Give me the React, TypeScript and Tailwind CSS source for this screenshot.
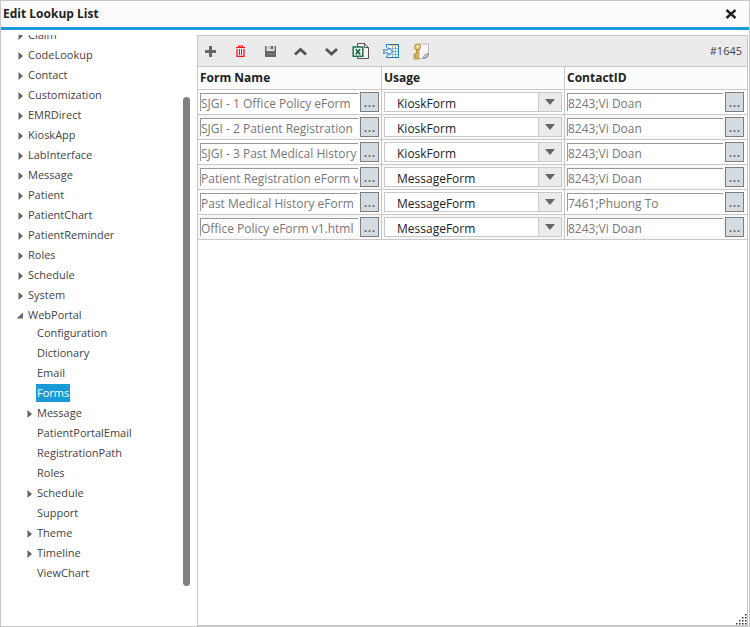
import { useState } from "react";

type Node = { label: string; kind: "closed" | "open" | "leaf"; children?: Node[] };

const tree: Node[] = [
  ...[
    "Claim",
    "CodeLookup",
    "Contact",
    "Customization",
    "EMRDirect",
    "KioskApp",
    "LabInterface",
    "Message",
    "Patient",
    "PatientChart",
    "PatientReminder",
    "Roles",
    "Schedule",
    "System",
  ].map((label): Node => ({ label, kind: "closed" })),
  {
    label: "WebPortal",
    kind: "open",
    children: [
      { label: "Configuration", kind: "leaf" },
      { label: "Dictionary", kind: "leaf" },
      { label: "Email", kind: "leaf" },
      { label: "Forms", kind: "leaf" },
      { label: "Message", kind: "closed" },
      { label: "PatientPortalEmail", kind: "leaf" },
      { label: "RegistrationPath", kind: "leaf" },
      { label: "Roles", kind: "leaf" },
      { label: "Schedule", kind: "closed" },
      { label: "Support", kind: "leaf" },
      { label: "Theme", kind: "closed" },
      { label: "Timeline", kind: "closed" },
      { label: "ViewChart", kind: "leaf" },
    ],
  },
];

const rows = [
  { name: "SJGI - 1 Office Policy eForm", usage: "KioskForm", contact: "8243;Vi Doan" },
  { name: "SJGI - 2 Patient Registration", usage: "KioskForm", contact: "8243;Vi Doan" },
  { name: "SJGI - 3 Past Medical History", usage: "KioskForm", contact: "8243;Vi Doan" },
  { name: "Patient Registration eForm v1", usage: "MessageForm", contact: "8243;Vi Doan" },
  { name: "Past Medical History eForm", usage: "MessageForm", contact: "7461;Phuong To" },
  { name: "Office Policy eForm v1.html", usage: "MessageForm", contact: "8243;Vi Doan" },
];

function Arrow({ kind }: { kind: Node["kind"] }) {
  return (
    <svg className="mt-0.5 h-2 w-2 shrink-0" viewBox="0 0 8 8" fill="#666" aria-hidden="true">
      {kind === "closed" && <path d="M3.5 0v8L8 4z" />}
      {kind === "open" && <path d="M8 0.5v6H1.5z" />}
    </svg>
  );
}

function TreeList({
  nodes,
  nested,
  selected,
  onSelect,
}: {
  nodes: Node[];
  nested?: boolean;
  selected: string;
  onSelect: (id: string) => void;
}) {
  return (
    <ul className={nested ? "-mt-0.5 pl-[9px]" : "-mt-2.5 pl-[14px]"}>
      {nodes.map((node) => {
        const id = (nested ? "WebPortal/" : "") + node.label;
        const active = id === selected;
        return (
          <li key={id}>
            <div className="flex h-5 items-center gap-1">
              <Arrow kind={node.kind} />
              <button
                type="button"
                onClick={() => onSelect(id)}
                className={
                  active
                    ? "h-[18px] bg-[#1a9ad6] px-px leading-[18px] font-medium text-white"
                    : "h-[18px] px-px leading-[18px] text-[#444]"
                }
              >
                {node.label}
              </button>
            </div>
            {node.children && (
              <TreeList nodes={node.children} nested selected={selected} onSelect={onSelect} />
            )}
          </li>
        );
      })}
    </ul>
  );
}

const tools = [
  {
    label: "Add",
    icon: <path d="M9.5 4v11M4 9.5h11" stroke="#666" strokeWidth="3" />,
  },
  {
    label: "Delete",
    icon: (
      <g stroke="#ff1414" fill="none">
        <path d="M5 5.5h9M7.5 5V4h4v1" strokeWidth="1.2" />
        <path d="M6 7v7.4h7V7" strokeWidth="1.3" />
        <path d="M8.5 7v6M10.5 7v6" strokeWidth="1" />
      </g>
    ),
  },
  {
    label: "Save",
    icon: (
      <g>
        <path d="M4 4h1.5v5h8V4H15v11H4z" fill="#666" />
        <path d="M6.5 4h6v3.5h-6z" fill="#c4c4c4" />
        <path d="M10 4h2v3h-2z" fill="#666" />
        <path d="M6 12h7" stroke="#888" />
      </g>
    ),
  },
  { label: "Move up", icon: <path d="M4 12.5l5.5-5 5.5 5" stroke="#555" strokeWidth="2.8" /> },
  { label: "Move down", icon: <path d="M5 7l5.5 5L16 7" stroke="#555" strokeWidth="2.8" /> },
  {
    label: "Export to Excel",
    icon: (
      <g>
        <path d="M6.5 1.5h7l4 4v11h-11z" fill="#f4f4f4" stroke="#555" />
        <path d="M13.5 1.5v4h4" fill="none" stroke="#555" />
        <path d="M2.2 5h9.6v9.2H2.2z" fill="#fff" stroke="#1d7044" strokeWidth="1.5" />
        <path d="M4.8 7l4.4 5.4M9.2 7l-4.4 5.4" stroke="#1d7044" strokeWidth="1.8" />
      </g>
    ),
  },
  {
    label: "Import",
    icon: (
      <g>
        <path d="M5.5 2.5h12v13h-12z" fill="#fff" />
        <path d="M8 6.5h9M8 9.5h9M8 12.5h9M11.5 4v11M14.5 4v11" stroke="#86b6d6" />
        <path d="M8.5 3.5h9" stroke="#e8c46c" />
        <path d="M5.5 5.5v-3h12v13h-12v-2" stroke="#1878b8" />
        <path d="M2 8h5V5.5L11.5 9.5 7 13.5V11H2l1.5-1.5z" fill="#fff" stroke="#1878b8" />
      </g>
    ),
  },
  {
    label: "Permissions",
    icon: (
      <g>
        <path d="M7 2h10.5v9.5q0 5-5 5H6z" fill="#f7f7f9" stroke="#b8b8c2" />
        <path d="M12.5 16.5q-.5-4 5-5-.5 4.500-5 5z" fill="#d4d4da" stroke="#777" strokeWidth="0.8" />
        <circle cx="6.500" cy="5" r="3" fill="#efc76a" stroke="#b08a3a" />
        <path d="M5.500 8h2.300v9H3v-2.300h2v-1H3v-2h2.500z" fill="#e4b653" stroke="#b08a3a" strokeWidth="0.8" />
        <circle cx="6.500" cy="4.500" r="1" fill="#fff" />
      </g>
    ),
  },
];

function LookupField({ label, value }: { label: string; value: string }) {
  return (
    <div className="flex h-5 gap-0.5">
      <input
        aria-label={label}
        defaultValue={value}
        className="my-px h-[18px] min-w-0 flex-1 border-t border-l border-t-[#999] border-l-[#999] bg-white pt-0.5 text-[#777] outline-none"
      />
      <button
        type="button"
        aria-label={"Browse " + label}
        className="flex h-5 w-[19px] items-end justify-center border border-[#7d7d7d] bg-[#d3dce3] text-[15px] leading-5 text-[#555]"
      >
        ...
      </button>
    </div>
  );
}

export default function App() {
  const [selected, setSelected] = useState("WebPortal/Forms");
  return (
    <div className="flex h-screen flex-col border border-[#c8c8c8] bg-white font-['Open_Sans','Noto_Sans',sans-serif] text-[12px] text-[#222]">
      <header className="flex h-[29px] shrink-0 items-center justify-between border-b-3 border-[#1a9ad6] bg-[#fcfcfc] pr-3 pl-0.5">
        <h1 className="text-[12px] font-bold">Edit Lookup List</h1>
        <button type="button" aria-label="Close" className="flex h-5 w-3 items-center justify-center">
          <svg className="h-3 w-3" viewBox="0 0 12 12" stroke="#222" strokeWidth="2.4" aria-hidden="true">
            <path d="M1.5 2l9 8M10.500 2l-9 8" />
          </svg>
        </button>
      </header>
      <main className="flex min-h-0 flex-1 pt-[5px] pr-px">
        <nav aria-label="Lookup lists" className="flex w-[196px] shrink-0 overflow-hidden text-[11px]">
          <div className="w-[182px] overflow-hidden">
            <TreeList nodes={tree} selected={selected} onSelect={setSelected} />
          </div>
          <div className="mt-[62px] mb-10 w-[7px] rounded-full bg-[#808080]" />
        </nav>
        <section className="relative flex min-w-0 flex-1 flex-col border border-[#c8c8c8]">
          <div className="flex h-[30px] shrink-0 items-center gap-1.5 bg-[#ebebeb] pr-[5px]">
            {tools.map((tool) => (
              <button
                key={tool.label}
                type="button"
                aria-label={tool.label}
                className="flex h-6 w-6 shrink-0 items-center justify-center"
              >
                <svg className="h-[19px] w-[19px]" viewBox="0 0 19 19" fill="none" aria-hidden="true">
                  {tool.icon}
                </svg>
              </button>
            ))}
            <span className="ml-auto text-[11px] text-[#444]">#1645</span>
          </div>
          <table className="w-full table-fixed border-separate border-spacing-0 border-t border-[#c8c8c8]">
            <colgroup>
              <col className="w-[184px]" />
              <col className="w-[183px]" />
              <col />
            </colgroup>
            <thead>
              <tr className="h-[23px] bg-[#fcfcfc] text-left">
                <th className="border-r border-b border-[#c8c8c8] px-0.5 py-0 font-bold">Form Name</th>
                <th className="border-r border-b border-[#c8c8c8] px-0.5 py-0 font-bold">Usage</th>
                <th className="border-b border-[#c8c8c8] px-0.5 py-0 font-bold">ContactID</th>
              </tr>
            </thead>
            <tbody>
              {rows.map((row, i) => (
                <tr key={i} className="h-[25px] odd:bg-white even:bg-[#f7f7f7]">
                  <td className="border-r border-b border-[#c8c8c8] px-0.5 py-0">
                    <LookupField label={"Form name " + (i + 1)} value={row.name} />
                  </td>
                  <td className="border-r border-b border-[#c8c8c8] px-0.5 py-0">
                    <div className="relative h-5">
                      <select
                        aria-label={"Usage " + (i + 1)}
                        defaultValue={row.usage}
                        className="h-5 w-full appearance-none border border-[#c8c8c8] bg-white pt-0.5 pr-6 pl-3 text-[#222] outline-none"
                      >
                        <option>KioskForm</option>
                        <option>MessageForm</option>
                      </select>
                      <span className="pointer-events-none absolute inset-y-0 right-0 flex w-6 items-center justify-center border border-[#c8c8c8] bg-[#ebebeb]">
                        <svg className="h-1.5 w-2.5" viewBox="0 0 10 6" fill="#666" aria-hidden="true">
                          <path d="M0 0h10L5 6z" />
                        </svg>
                      </span>
                    </div>
                  </td>
                  <td className="border-b border-[#c8c8c8] py-0 pr-[3px] pl-0.5">
                    <LookupField label={"Contact " + (i + 1)} value={row.contact} />
                  </td>
                </tr>
              ))}
            </tbody>
          </table>
          <svg className="absolute right-0 bottom-0 h-3 w-3" viewBox="0 0 12 12" fill="#333" aria-hidden="true">
            <path d="M10 1h1.5v1.5H10zM7 4h1.5v1.5H7zM10 4h1.5v1.5H10zM4 7h1.5v1.5H4zM7 7h1.5v1.5H7zM10 7h1.5v1.5H10zM1 10h1.5v1.5H1zM4 10h1.5v1.5H4zM7 10h1.5v1.5H7zM10 10h1.5v1.5H10z" />
          </svg>
        </section>
      </main>
    </div>
  );
}
